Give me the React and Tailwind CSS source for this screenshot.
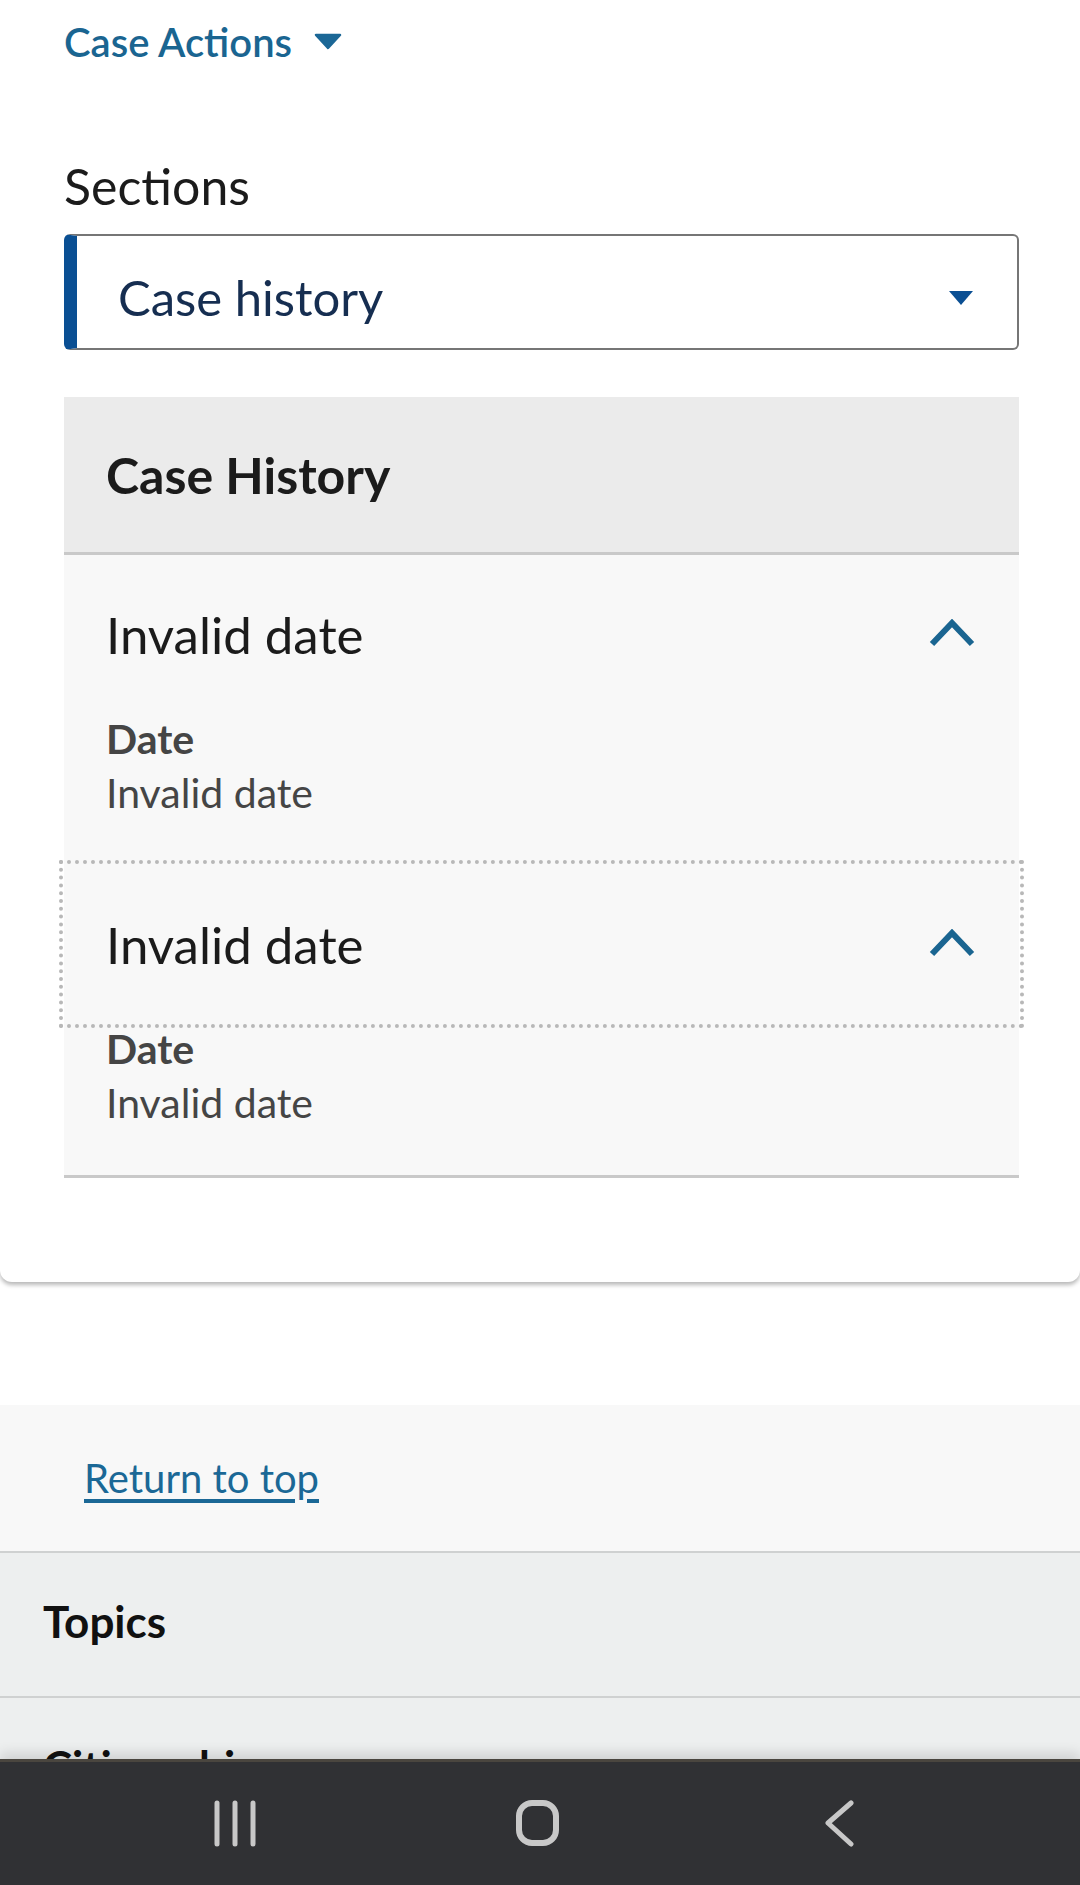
import React from "react";

const font = "font-['Lato','Noto_Sans',sans-serif]";

function ChevronUp() {
  return (
    <svg width="48" height="30" viewBox="0 0 48 30" fill="none">
      <polyline points="4,25 24,4 44,25" stroke="#1a6591" strokeWidth="6" />
    </svg>
  );
}

function HistoryItem({ title, label, value, focused }) {
  return (
    <div className="bg-[#f8f8f8]">
      <div
        className={`h-[158px] flex items-center justify-between pl-[42px] pr-[43px] ${
          focused ? "outline-4 outline-dotted outline-[#b8b8b8] outline-offset-1" : ""
        }`}
      >
        <span className="text-[51px] leading-none text-[#1b1b1b]">{title}</span>
        <ChevronUp />
      </div>
      <div className="pl-[42px] pt-[5px] pb-[52px]">
        <div className="text-[41px] leading-none font-bold text-[#454545]">{label}</div>
        <div className="mt-[13px] text-[41px] leading-none text-[#454545]">{value}</div>
      </div>
    </div>
  );
}

export default function App() {
  return (
    <div className={`relative w-[1080px] h-[1885px] overflow-hidden bg-white ${font}`}>
      {/* case card */}
      <div className="bg-white rounded-b-[12px] shadow-[0_3px_4px_rgba(0,0,0,0.28)] pb-[104px]">
        <div className="pl-[64px] pr-[61px]">
          <div className="h-[83px] flex items-center gap-[22px]">
            <span className="text-[40px] leading-none font-semibold text-[#1a6591]">Case Actions</span>
            <svg width="28" height="17" viewBox="0 0 28 17">
              <polygon points="2,2 26,2 14,15" fill="#1b6796" stroke="#1b6796" strokeWidth="2.5" strokeLinejoin="round" />
            </svg>
          </div>

          <div className="mt-[78px] text-[50px] leading-none text-[#1b1b1b]">Sections</div>

          <div className="mt-[23px] h-[116px] flex items-center justify-between border-2 border-l-[13px] border-[#767676] border-l-[#0a4f93] rounded-[6px] pl-[41px] pr-[43px] pt-[11px]">
            <span className="text-[49px] leading-none text-[#162e51]">Case history</span>
            <svg width="26" height="16" viewBox="0 0 26 16">
              <polygon points="1,1 25,1 13,15" fill="#0a4f93" />
            </svg>
          </div>

          <div className="mt-[47px] border-b-[3px] border-[#c9c9c9]">
            <div className="h-[158px] flex items-center pl-[42px] bg-[#ebebeb] border-b-[3px] border-[#c9c9c9]">
              <span className="text-[50px] leading-none font-bold text-[#1b1b1b]">Case History</span>
            </div>
            <HistoryItem title="Invalid date" label="Date" value="Invalid date" />
            <HistoryItem title="Invalid date" label="Date" value="Invalid date" focused />
          </div>
        </div>
      </div>

      {/* footer */}
      <div className="mt-[123px] h-[148px] flex items-center pl-[84px] bg-[#f8f8f8] border-b-[2px] border-[#cfd1d1]">
        <a href="#top" className="text-[40px] leading-none text-[#1b6896] underline decoration-[4px] underline-offset-[6px]">
          Return to top
        </a>
      </div>
      <div className="h-[145px] pl-[43px] pt-[46px] bg-[#edefef] border-b-[2px] border-[#cfd1d1]">
        <span className="text-[44px] leading-none font-bold text-[#111111]">Topics</span>
      </div>
      <div className="h-[145px] pl-[43px] pt-[46px] bg-[#edefef]">
        <span className="text-[44px] leading-none font-bold text-[#111111]">Citizenship</span>
      </div>

      {/* system navigation bar */}
      <div className="absolute left-0 bottom-0 w-[1080px] h-[126px] bg-[#303134] border-t-[3px] border-[#4a463f] shadow-[0_-6px_12px_rgba(0,0,0,0.12)] flex items-center pl-[211px] gap-[254px]">
        <svg width="48" height="48" viewBox="0 0 48 48" fill="none" stroke="#c8c8c8" strokeWidth="5" strokeLinecap="round">
          <line x1="6" y1="3" x2="6" y2="44" />
          <line x1="24" y1="3" x2="24" y2="44" />
          <line x1="42" y1="3" x2="42" y2="44" />
        </svg>
        <svg width="48" height="48" viewBox="0 0 48 48" fill="none" stroke="#c8c8c8" strokeWidth="6">
          <rect x="6" y="3" width="37" height="40" rx="13" />
        </svg>
        <svg width="48" height="48" viewBox="0 0 48 48" fill="none" stroke="#c8c8c8" strokeWidth="5" strokeLinecap="round" strokeLinejoin="round">
          <polyline points="36,3 13,23 36,44" />
        </svg>
      </div>
    </div>
  );
}
